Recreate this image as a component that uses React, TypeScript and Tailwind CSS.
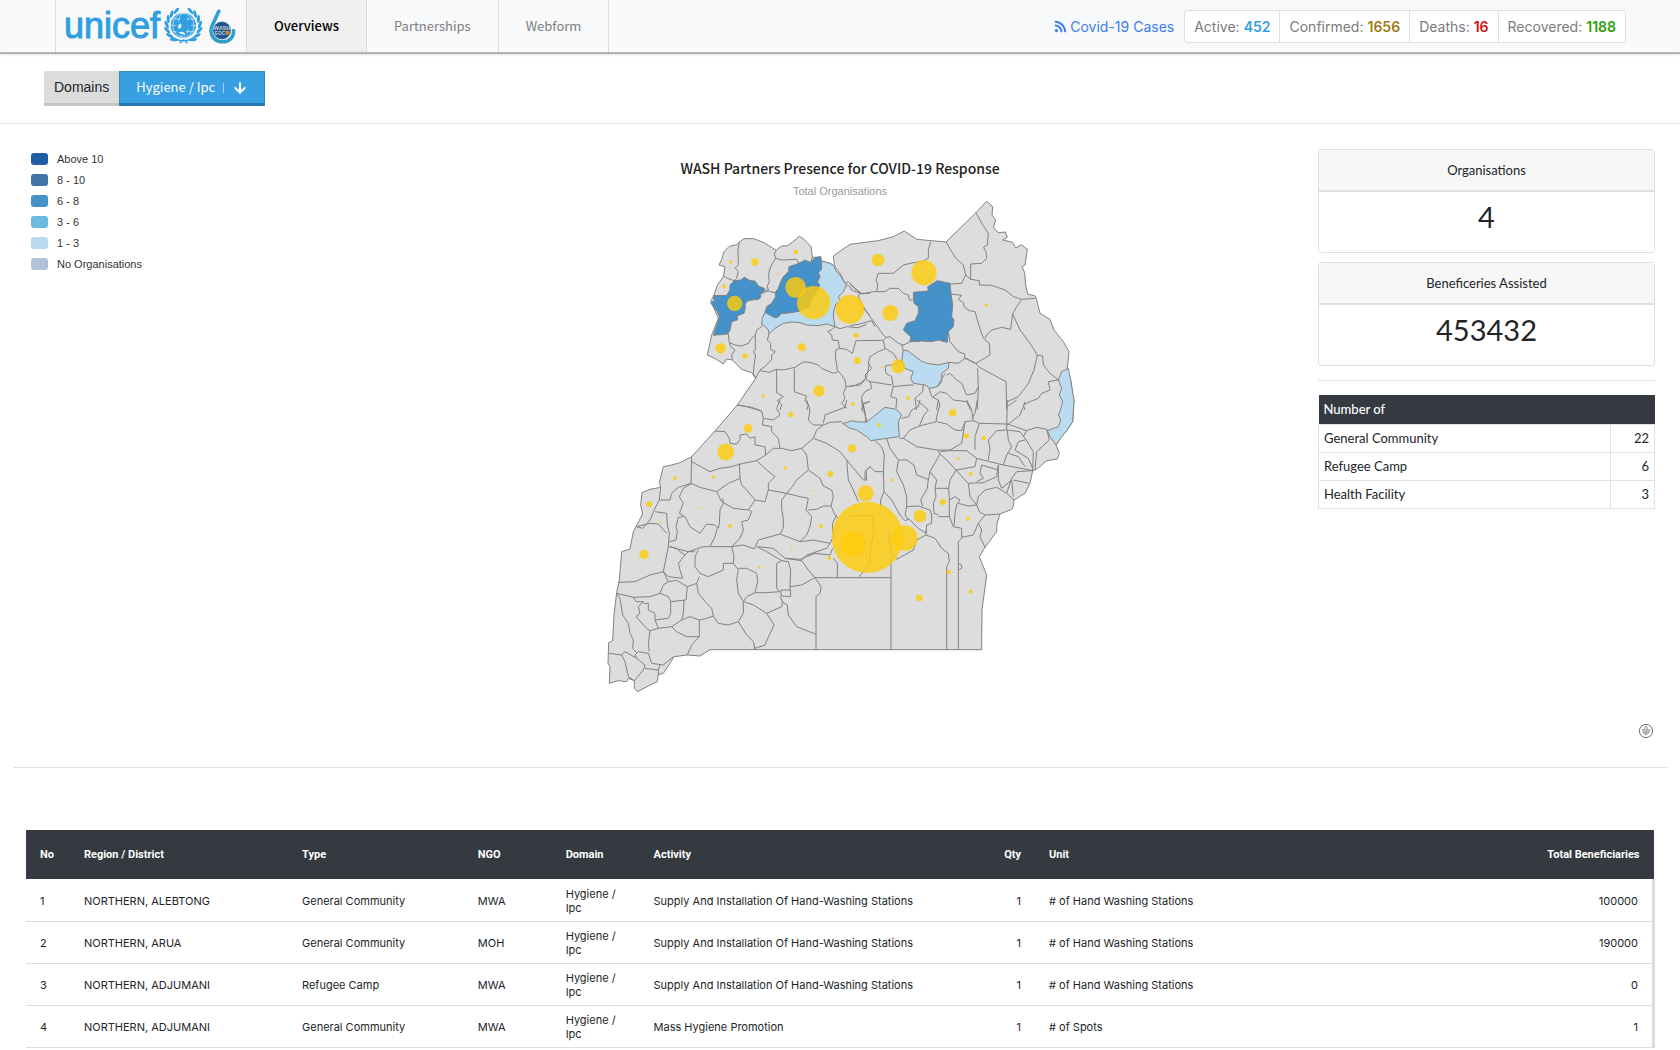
import React from "react";
import { FaRss } from "react-icons/fa";
import { ArrowDown } from "lucide-react";

const SOURCE = "font-['Noto_Sans_CJK_SC',sans-serif]";
const INTER = "font-['Inter',sans-serif]";
const ROBOTO = "font-['Roboto',sans-serif]";
const HELV = "font-['Liberation_Sans',sans-serif]";
const LATO = "font-['Lato',sans-serif]";

const navItems = [
  { label: "Overviews", active: true },
  { label: "Partnerships", active: false },
  { label: "Webform", active: false },
];

const cases = [
  { label: "Active", value: "452", color: "text-[#2f9fe6]" },
  { label: "Confirmed", value: "1656", color: "text-[#a07c12]" },
  { label: "Deaths", value: "16", color: "text-[#d60f0f]" },
  { label: "Recovered", value: "1188", color: "text-[#2f9f10]" },
];

const legend = [
  { label: "Above 10", color: "bg-[#215ca6]" },
  { label: "8 - 10", color: "bg-[#4274aa]" },
  { label: "6 - 8", color: "bg-[#4592ca]" },
  { label: "3 - 6", color: "bg-[#6cb9e2]" },
  { label: "1 - 3", color: "bg-[#b9daec]" },
  { label: "No Organisations", color: "bg-[#b0c1dc]" },
];

const counts = [
  { label: "General Community", value: 22 },
  { label: "Refugee Camp", value: 6 },
  { label: "Health Facility", value: 3 },
];

const rows = [
  ["1", "NORTHERN, ALEBTONG", "General Community", "MWA", "Hygiene / Ipc", "Supply And Installation Of Hand-Washing Stations", "1", "# of Hand Washing Stations", "100000"],
  ["2", "NORTHERN, ARUA", "General Community", "MOH", "Hygiene / Ipc", "Supply And Installation Of Hand-Washing Stations", "1", "# of Hand Washing Stations", "190000"],
  ["3", "NORTHERN, ADJUMANI", "Refugee Camp", "MWA", "Hygiene / Ipc", "Supply And Installation Of Hand-Washing Stations", "1", "# of Hand Washing Stations", "0"],
  ["4", "NORTHERN, ADJUMANI", "General Community", "MWA", "Hygiene / Ipc", "Mass Hygiene Promotion", "1", "# of Spots", "1"],
];

const leaves = [-20, 0, 20, 40, 60, 80, 100];

function Emblem() {
  return (
    <svg viewBox="325 24 120 108" className="h-9 w-10" aria-hidden="true">
      <g fill="#2f9fe0">
        {leaves.map((a) => (
          <ellipse key={"r" + a} cx="383" cy="28" rx="12" ry="4.5" transform={`rotate(${a + 45} 383 78) rotate(28 383 28)`} />
        ))}
        {leaves.map((a) => (
          <ellipse key={"l" + a} cx="383" cy="28" rx="12" ry="4.5" transform={`rotate(${-a - 45} 383 78) rotate(-28 383 28)`} />
        ))}
      </g>
      <path d="M352 112Q372 128 398 120M414 112Q394 128 368 120M372 130L384 119 396 130" fill="none" stroke="#2f9fe0" strokeWidth="4" />
      <circle cx="383" cy="76" r="40" fill="#2f9fe0" stroke="#f9f9fa" strokeWidth="4" />
      <g fill="none" stroke="#e6f2fa" strokeWidth="2">
        <ellipse cx="383" cy="76" rx="32" ry="36" />
        <ellipse cx="383" cy="76" rx="15" ry="36" />
        <path d="M346 76H420M351 57H415M351 95H415" />
      </g>
      <path d="M386 42C374 40 370 54 375 62C362 68 358 84 364 102L392 110C396 100 390 92 384 88C394 92 408 84 408 72C410 60 400 56 394 62C396 52 396 44 386 42Z" fill="#2f9fe0" />
      <path d="M374 70C366 76 364 86 371 86C378 84 380 78 374 70M368 98C376 92 390 96 388 106Z" fill="#eaf5fc" />
    </svg>
  );
}

function SixBadge() {
  return (
    <svg viewBox="460 20 86 112" className="h-9 w-7" aria-hidden="true">
      <defs>
        <linearGradient id="six" x1="0" y1="0" x2="0" y2="1">
          <stop offset="0" stopColor="#2f9fe0" />
          <stop offset="1" stopColor="#2d9fc4" />
        </linearGradient>
      </defs>
      <path d="M493 30L471 78C463 104 480 125 504 125C526 125 540 111 539 90" fill="none" stroke="url(#six)" strokeWidth="11" strokeLinecap="round" />
      <circle cx="503" cy="90" r="28" fill="#1d568c" stroke="#f4f8fa" strokeWidth="1" />
      <text x="503" y="88" textAnchor="middle" fontSize="17" fontWeight="700" fill="#c3d2de" fontFamily="Liberation Sans, sans-serif">WASH</text>
      <text x="497" y="103" textAnchor="middle" fontSize="15" fontWeight="700" fill="#c3d2de" fontFamily="Liberation Sans, sans-serif">EOC</text>
      <rect x="514" y="91" width="12" height="12" fill="#d8843a" />
    </svg>
  );
}

const OUTLINE =
  "M357 345 365 328 372 305 388 289 410 284 418 276 432 266 462 266 492 278 522 297 529 300 545 288 563 287 585 270 598 259 612 268 633 290 637 320 652 325 662 320 664 333 690 340 703 348 700 318 750 283 810 275 835 272 880 260 913 243 950 268 1038 276 1128 188 1160 154 1178 170 1176 195 1187 210 1180 232 1195 248 1216 246 1222 262 1208 270 1238 277 1247 294 1264 284 1282 298 1275 345 1266 350 1274 368 1277 405 1283 432 1306 438 1310 450 1320 490 1350 508 1362 540 1390 575 1407 605 1402 655 1412 690 1420 745 1422 750 1418 815 1400 842 1385 860 1368 885 1378 910 1372 927 1340 932 1325 945 1310 958 1298 962 1290 1000 1275 1030 1242 1050 1240 1068 1235 1078 1200 1092 1191 1120 1190 1145 1155 1192 1138 1220 1160 1275 1146 1380 1145 1499 330 1499 300 1518 262 1515 222 1520 210 1540 190 1570 175 1574 172 1595 145 1608 113 1625 103 1615 103 1592 85 1585 80 1595 55 1592 28 1600 30 1550 24 1540 26 1478 38 1472 42 1395 50 1328 58 1290 65 1205 90 1197 100 1145 128 1092 122 1065 126 1028 150 1018 182 1012 178 998 190 950 215 945 240 938 275 920 345 843 412 765 467 685 455 668 425 658 397 630 380 627 370 642 350 628 322 615 335 555 355 505 340 470 332 455 342 435 352 405 370 380 375 350Z";

const ARUA =
  "M340 437 380 436 390 420 390 405 403 392 422 390 433 382 450 392 465 393 475 408 493 415 491 428 482 430 482 443 475 448 455 450 440 454 435 465 436 475 432 490 412 497 412 510 395 515 390 540 383 552 350 555 340 556 352 520 358 500 352 485 340 470 332 458 343 452Z";
const ADJUMANI =
  "M525 428 535 415 540 400 550 380 565 365 567 350 597 340 615 330 632 338 645 322 662 320 664 358 655 368 660 380 652 395 659 405 640 440 625 470 600 483 570 488 545 490 535 500 525 503 510 495 495 487 500 470 515 460 527 440Z";
const AMURU =
  "M664 333 690 340 703 348 707 362 722 378 735 400 740 404 728 428 715 440 722 455 708 462 702 480 700 500 705 530 680 522 655 527 620 525 600 518 575 516 550 520 525 535 507 552 505 540 497 530 485 525 487 505 495 487 510 495 525 503 535 500 545 490 570 488 600 483 625 470 640 440 659 405 652 395 660 380 655 368 664 358Z";
const AGAGO =
  "M940 427 985 423 983 410 1012 392 1050 400 1053 430 1058 465 1055 500 1062 510 1060 530 1045 545 1042 577 1015 570 995 575 965 573 930 575 932 560 910 540 920 520 945 512 955 490 955 470 942 460Z";
const ALEBTONG =
  "M910 600 922 602 940 615 962 632 980 640 1015 645 1047 637 1045 655 1025 670 1025 695 1012 710 990 715 975 705 940 700 932 685 940 665 915 655 905 635Z";
const AMUDAT =
  "M1405 655 1385 665 1375 690 1385 715 1378 735 1388 755 1380 785 1375 795 1382 810 1375 830 1342 842 1350 860 1368 885 1385 860 1400 842 1418 815 1422 750 1412 690Z";
const AMOLATAR =
  "M727 820 740 818 755 812 775 816 800 816 820 800 855 772 890 778 905 795 895 815 898 860 860 865 812 872 800 860 770 840 750 835Z";

const NORTH_WEST =
  "M418 276 414 300 415 345 405 355 415 365 410 385 403 392M370 378 385 386 403 392M529 300 523 312 527 325 515 345 508 360 506 380 508 395 502 408 505 420 491 420M527 325 545 330 590 328 597 340M637 320 632 338M482 430 505 423 525 428M385 552 388 578 405 585 425 588 445 580 455 565 466 555 470 540 485 530M388 578 392 590 405 600 395 615 397 630M466 555 466 600 460 605 467 615 463 640 460 670 467 685M507 552 502 570 512 580 512 598 526 605 515 615 515 628 497 648 480 660 467 685M480 662 508 667 528 658 550 660 585 652 610 636 630 637 655 645 665 655 700 670 715 665M705 530 697 538 683 545 695 555 697 570 715 572 718 595 708 600 706 620 712 660 725 675 735 690 738 710M718 595 740 598 757 610 768 572 850 571M705 530 720 536 740 530 775 533 800 523M735 400 745 395 765 415 785 430 810 430M740 404 750 410 755 420 780 430 775 438 790 475 810 497M703 348 720 370 735 400M530 658 530 728 550 740 532 752 545 765 540 780M583 655 583 725 620 738 615 752 625 765 620 780M738 710 730 730 735 745 725 760 740 775M738 710 760 708 785 698 800 680 808 640M808 755 790 760 785 780 795 790M412 765 440 770 485 783";
const NORTH_EAST =
  "M0 402 25 425 35 432 70 425 80 425 83 405 78 390 85 370 130 370 160 345 190 338 215 335 235 325 235 300 242 276M80 425 105 425 120 415 145 415 160 430 175 435 178 450 190 450M40 470 60 500 75 520 100 555 108 562M288 276 305 305 318 325 340 345 347 375 335 400 300 402M378 188 395 220 415 250 412 285 400 292 408 305 410 325 395 340 362 342 362 390M347 375 362 388 388 392 388 405 425 406 465 420 490 440 515 448 556 445M303 432 335 436 325 448 340 458 342 470 358 482 375 485 388 530 400 565 418 580 420 615 378 640M295 545 300 575 325 605 345 612 343 622 375 640M515 448 500 470 488 492 482 538 455 532 425 540 410 555 405 565M488 492 510 540 540 580 562 615 552 660 535 700 505 740 472 755M562 615 578 618 580 645 600 670 625 690M625 690 595 695 600 720 575 730 565 745 540 755 520 765 525 780M378 640 385 650 468 695 470 780M378 640 345 625 325 640 297 637M160 600 155 588 180 575 210 573M0 527 30 522 65 512 75 530M100 572 108 562 120 560 145 580 160 585M100 572 105 595 130 610 145 635 155 635M105 597 85 605 60 620 55 640 65 655 45 675 50 690 60 695 125 705M145 640 105 648 108 670 125 680 130 710 122 740 140 745 138 775M0 708 30 705 45 690M60 695 65 715 45 725 35 740 38 780M130 710 180 705 190 705M220 705 218 725 195 745 200 780M237 715 245 740 265 750 260 780M262 710 285 670M250 740 270 725 290 730 310 750 350 755 362 780M290 675 300 670 320 690 335 700 350 735 375 730 385 710 383 655M385 710 382 780";
const SOUTH_WEST =
  "M412 15 455 22 485 33 490 55 520 60 540 45 530 25 540 0M490 55 487 75 515 80 515 95 535 115 540 145M345 93 375 95 388 115 390 130 410 133 420 118 420 105 440 102 450 115 465 110 465 135 495 140 497 165M497 165 520 145 545 145 575 152 605 145 640 115 650 90 670 75 690 67 725 65M620 0 630 30 625 60 640 75 670 75M670 70 675 45 700 35 735 22 740 0M810 5 790 12 795 40 800 65M640 115 680 130 720 155 740 180 765 210 790 240 800 240 798 212 810 200M740 180 745 240 760 270 775 305M605 145 620 165 625 210 660 235 670 258 695 270 700 290 693 318M497 165 470 182 430 190 395 200 360 205 330 215 275 185M275 170 273 250 300 262 350 275 385 250 420 235 418 190M470 182 500 210 525 230 505 250 505 270 495 305 465 300 440 270 425 255 420 235M350 275 365 305 400 325 445 330 465 300M505 270 560 280 600 290 625 295 618 330 635 350 630 380 620 405 600 425M560 280 545 300 545 325 550 360 550 385 540 402 475 420 463 447M560 280 575 262 590 240 625 210M625 330 650 328 670 318 693 318 705 345 715 355M540 402 600 425 640 420 690 430 700 410 697 370 710 345M445 330 455 335 445 360 425 365 430 390 420 415 395 440M463 447 430 435 395 440 310 440 265 455 245 450 208 440M368 295 370 310 360 330 358 370 355 385 345 375 320 372 300 400 270 380 255 350 238 340 250 310 238 290 250 265 275 250M352 385 345 410 330 440M182 262 178 300 210 300 215 280 235 262 273 250M178 300 165 325 150 360 128 385 110 380M165 335 200 340 202 375 208 400 205 440 190 515M110 380 150 370 175 372 200 400M250 350 235 352 228 380 232 395 228 420 208 425M55 547 105 545 150 525 190 515M208 440 230 445 240 455 255 465 235 490 240 510 248 535 205 530 190 515M395 440 402 470 400 490 370 490 370 510 325 530 300 520 285 500 285 470 295 450M255 465 265 455 285 455M190 515 205 545 230 541 262 560 290 550 298 530M205 545 190 555 180 580 205 590 212 605 258 600 262 560M50 580 100 592 150 590 180 580M50 580 60 595 68 645 85 670 90 700 100 720 98 745 110 758M100 592 108 605 130 605 115 620 120 640 108 650 140 685 150 692M130 610 145 610 145 630 165 640 165 660 205 655 212 640 212 605M165 660 175 685 150 692 145 730 148 755M175 685 215 680 245 660 250 640 252 602M215 680 230 695 260 710 298 710 298 660 270 650 245 660M290 550 295 580 320 610 335 625 340 648 320 655 298 660M340 648 355 670 385 675 415 665 430 640 430 605 415 580 410 540 415 510 400 490M415 505 440 505 470 520 473 545 465 578 440 590 430 605M470 440 500 455 545 482 530 490 530 565 540 575 500 578 465 578M475 440 520 445 555 475 600 478 645 460 690 465 698 445M690 430 680 445 620 465 605 480M545 482 565 485 572 510 570 560 572 590 543 588 543 570 572 570M570 560 605 555 645 533 625 510 605 482 555 475M645 533 875 533M712 533 712 490 700 475M645 533 663 560 660 580 648 590 648 748M432 605 460 615 500 640 545 620 548 605 540 590M500 640 522 675 510 700 495 735 465 745 460 725 440 705 415 665M463 735 463 748M545 605 562 615 565 645 590 680 648 703M298 710 275 735 262 765M26 760 65 765 75 755 110 775 105 765 115 755 145 760 155 790 190 795 220 770M65 765 75 785 85 830 103 842M110 775 135 795 130 810 103 842M135 805 175 810 180 795M175 810 175 824";
const SOUTH_EAST =
  "M35 0 45 40 48 68M155 55 175 50 185 30 205 20 210 0M200 0 235 30 222 45 208 78 180 90 160 115M208 78 260 65 290 72 315 90 335 92 345 65 370 62 388 70 472 72M265 0 270 15 262 40 258 65M350 0 365 30 370 60M382 0 375 40 365 55M388 70 375 110 375 150M345 65 335 130 300 150 262 150 230 145 200 140 160 115 148 115M110 115 120 145 145 180 140 215 160 255 170 290 170 320 165 345 175 358 165 362 150 345 125 300 102 275 100 215 103 165 95 140 75 122M100 215 75 215 60 200 45 215 45 240M102 275 92 300 92 320M145 180 170 180 192 195 200 225 235 238 232 265 212 300 218 318M262 150 270 162 240 215 260 240 255 265 258 290 250 310 252 340 265 345M240 215 235 240M270 162 290 180 318 210 300 240 296 265 255 265M296 265 298 300 298 350 265 350M170 320 205 318 240 330 245 345 245 370 230 375 228 400 205 385 175 355M228 390 228 405 255 415 275 445 295 460 298 485 290 500 290 748M228 405 200 420 190 450 140 478M298 350 310 380 335 385 335 415 325 425 325 748M325 490 335 495 335 505 325 510M298 300 315 290 330 300 320 315 315 340 312 380M325 310 355 318 380 315 388 335 405 345 450 342M318 210 345 240 355 250 360 290 380 315M405 345 385 370 370 405 335 412M385 370 395 390 390 410 405 442M380 315 385 290 405 270 440 262 470 280 492 300M355 250 400 248 440 230 445 195M318 210 375 200 380 175 350 152 300 152 270 155M380 175 460 195 550 212M395 195 390 220 400 235 380 245M395 195 445 210M445 195 445 240 455 265M455 265 485 240 490 290M490 240 537 250M550 212 500 215 485 235 470 280M415 180 420 145 415 120 440 92 470 90 472 0M472 90 475 120 485 140 470 165 460 195M472 90 510 95 525 115 550 155 548 210M525 120 505 125 495 150 535 175 548 205M475 160 505 170 525 200M520 110 530 92 560 82 590 88 598 120 560 155 555 210M472 72 510 85 530 92M472 20 500 0M472 75 510 45 520 20 525 5M123 478 123 748M0 347 68 347 72 395 62 440 60 490 28 530M115 400 125 460 140 478";

const BUBBLES: [number, number, number][] = [
  [392, 335, 5], [465, 336, 11], [587, 306, 7], [371, 409, 6], [404, 460, 23], [587, 412, 31], [641, 458, 50],
  [750, 478, 43], [362, 595, 16], [435, 618, 8], [605, 592, 12], [768, 556, 8], [772, 632, 10], [657, 723, 17],
  [490, 738, 5], [758, 762, 6], [532, 372, 3], [834, 330, 19], [972, 368, 38], [871, 489, 24], [895, 649, 21],
  [1159, 466, 5], [925, 744, 6], [845, 652, 3], [1100, 546, 2], [573, 794, 8], [444, 835, 13], [377, 906, 25],
  [225, 984, 6], [341, 981, 5], [147, 1063, 9], [557, 954, 5], [756, 895, 12], [691, 972, 9], [132, 1213, 14],
  [390, 1127, 6], [304, 1073, 3], [180, 1117, 3], [403, 1031, 2], [470, 990, 2], [640, 1022, 3], [662, 1129, 6],
  [688, 1224, 6], [575, 1190, 3], [477, 1252, 4], [837, 825, 6], [1058, 788, 11], [1099, 858, 8], [1152, 864, 7],
  [1075, 926, 4], [1112, 972, 6], [877, 990, 5], [797, 1030, 24], [802, 1162, 107], [758, 1182, 38], [915, 1164, 38],
  [960, 1098, 19], [1029, 1056, 9], [1104, 1106, 6], [1046, 1266, 7], [958, 1344, 10], [1112, 1325, 6],
];

function UgandaMap() {
  return (
    <svg viewBox="0 150 1440 1500" className="h-[500px] w-[480px]" role="img" aria-label="Map of partner presence by district">
      <g stroke="#828282" strokeWidth="3" strokeLinejoin="round">
        <path d={OUTLINE} fill="#dddddd" />
        <path d={AMURU} fill="#bbdcf0" />
        <path d={ALEBTONG} fill="#bbdcf0" />
        <path d={AMUDAT} fill="#bbdcf0" />
        <path d={AMOLATAR} fill="#bbdcf0" />
        <path d={ARUA} fill="#4592ca" />
        <path d={ADJUMANI} fill="#4592ca" />
        <path d={AGAGO} fill="#4592ca" />
        <g fill="none">
          <path d={NORTH_WEST} />
          <path d={NORTH_EAST} transform="translate(750 0)" />
          <path d={SOUTH_WEST} transform="translate(0 750)" />
          <path d={SOUTH_EAST} transform="translate(750 750)" />
        </g>
      </g>
      <g fill="#fccc0a" fillOpacity="0.82">
        {BUBBLES.map(([x, y, r]) => (
          <circle key={`${x}-${y}`} cx={x} cy={y} r={r} />
        ))}
      </g>
    </svg>
  );
}

function StatCard({ title, value }: { title: string; value: string }) {
  return (
    <section className="rounded-[3px] border border-[#dfdfdf] text-center text-[#212529]">
      <h2 className="border-b-2 border-[#dfdfdf] bg-[#f7f7f7] py-[10px] text-[13px] leading-5">{title}</h2>
      <p className="pt-[7px] pb-[17px] text-[29px] leading-9">{value}</p>
    </section>
  );
}

export default function App() {
  return (
    <div className={`min-h-screen bg-white text-[#212529] ${INTER}`}>
      <header className="flex h-[54px] items-stretch justify-between border-b-2 border-[#b4b4b4] bg-[#f8f9fb] pr-[54px] pl-[55px] shadow-sm">
        <nav className="flex items-stretch">
          <a href="#home" className="flex w-[192px] items-center border-x border-[#dcdcdc] bg-[#f9f9fa] pl-2">
            <span className={`text-[36px] leading-[50px] text-[#2f9fe0] [-webkit-text-stroke:1px_#2f9fe0] ${HELV}`}>unicef</span>
            <span className="ml-1"><Emblem /></span>
            <span className="ml-1"><SixBadge /></span>
          </a>
          {navItems.map((item) => (
            <a
              key={item.label}
              href={`#${item.label.toLowerCase()}`}
              className={`flex items-center border-r border-[#dcdcdc] px-[27px] text-[13px] ${SOURCE} ${item.active ? "bg-[#f0f0f0] font-medium text-black" : "text-[#7d7d7d]"}`}
            >
              {item.label}
            </a>
          ))}
        </nav>
        <div className="flex items-center gap-[10px] text-[14px] text-[#7b7b7b]">
          <a href="#cases" className="flex items-center gap-[3px] text-[#3d7df0]">
            <FaRss className="size-[13px]" />
            Covid-19 Cases
          </a>
          <ul className="flex h-[33px] items-stretch divide-x divide-[#dcdfe4] rounded-[3px] border border-[#dcdfe4] bg-white">
            {cases.map((c) => (
              <li key={c.label} className="flex items-center gap-1 px-[9px]">
                {c.label}: <b className={`font-semibold ${c.color}`}>{c.value}</b>
              </li>
            ))}
          </ul>
        </div>
      </header>

      <div className="flex border-b border-[#e2e2e2] px-11 py-[17px]">
        <span className={`flex h-[35px] items-center border-b-[3px] border-[#c6c6c6] bg-[#dcdcdc] px-[10px] text-[14px] ${HELV}`}>Domains</span>
        <button type="button" className={`flex h-[35px] items-center border border-b-[3px] border-[#2a93b0] border-b-[#2a78b0] bg-[#389fe2] px-4 text-[13px] text-white ${SOURCE}`}>
          <span className="pb-[3px] leading-none">Hygiene / Ipc</span>
          <span className="mx-2 h-[10px] w-px bg-[#a8d4f2]" />
          <ArrowDown className="size-4" strokeWidth={3} />
        </button>
      </div>

      <main>
        <div className="grid grid-cols-[336px_1fr_337px] pt-[25px] pr-[25px] pl-[26px]">
          <ul className={`space-y-[9px] pt-1 pl-[5px] text-[11px] leading-3 text-[#333] ${HELV}`}>
            {legend.map((l) => (
              <li key={l.label} className="flex items-center gap-[9px]">
                <span className={`h-3 w-[17px] rounded-[3px] ${l.color}`} />
                {l.label}
              </li>
            ))}
          </ul>

          <section className="flex flex-col items-center">
            <h1 className={`pt-2 text-[14px] leading-[22px] font-medium text-[#222] ${SOURCE}`}>
              WASH Partners Presence for COVID-19 Response
            </h1>
            <p className={`pt-1 pb-px text-[11px] leading-4 text-[#999] ${HELV}`}>Total Organisations</p>
            <UgandaMap />
          </section>

          <aside className={`flex flex-col ${LATO}`}>
            <div className="space-y-[9px]">
              <StatCard title="Organisations" value="4" />
              <StatCard title="Beneficeries Assisted" value="453432" />
            </div>
            <hr className="my-[14px] border-[#e2e2e2]" />
            <table className="w-full border-collapse text-[13px] leading-[27px]">
              <thead>
                <tr className="bg-[#343a40] text-left text-white">
                  <th colSpan={2} scope="colgroup" className="px-[5px] py-px font-medium">Number of</th>
                </tr>
              </thead>
              <tbody>
                {counts.map((c) => (
                  <tr key={c.label} className="border border-[#e2e2e2]">
                    <td className="px-[5px]">{c.label}</td>
                    <td className="w-11 border-l border-[#e2e2e2] px-[5px] text-right">{c.value}</td>
                  </tr>
                ))}
              </tbody>
            </table>
          </aside>
        </div>

        <div className="flex justify-end pt-[23px] pr-[25px] pb-7">
          <button type="button" aria-label="Download" className="mr-px">
            <svg viewBox="0 0 16 16" className="size-4" fill="none" stroke="#6f6f6f">
              <circle cx="8" cy="8" r="6.6" />
              <path d="M8 3.5C6.8 3.5 6.8 5 6.8 7.3L4.6 6.7Q4 9.8 8 12Q12 9.8 11.4 6.7L9.2 7.3C9.2 5 9.2 3.5 8 3.5ZM5.2 9.2H10.8M8 6V11" strokeWidth="0.8" />
            </svg>
          </button>
        </div>
        <hr className="mr-3 ml-[14px] border-[#e2e2e2]" />

        <div className="pt-[62px] pr-[25px] pl-[26px]">
          <table className="w-full table-fixed border-collapse text-[11px] leading-[14px]">
            <colgroup>
              <col className="w-[2.7%]" />
              <col className="w-[13.4%]" />
              <col className="w-[10.8%]" />
              <col className="w-[5.4%]" />
              <col className="w-[5.4%]" />
              <col className="w-[20.3%]" />
              <col className="w-[4%]" />
              <col className="w-[25%]" />
              <col className="w-[13%]" />
            </colgroup>
            <thead>
              <tr className={`h-[49px] bg-[#343a40] text-left text-[11px] text-white ${ROBOTO}`}>
                {["No", "Region / District", "Type", "NGO", "Domain", "Activity", "Qty", "Unit", "Total Beneficiaries"].map((h, i) => (
                  <th key={h} scope="col" className={`px-[14px] font-bold whitespace-nowrap ${i === 6 || i === 8 ? "text-right" : ""}`}>{h}</th>
                ))}
              </tr>
            </thead>
            <tbody>
              {rows.map((r) => (
                <tr key={r[0]} className="h-[42px] border-b border-[#dedede]">
                  {r.map((v, i) => (
                    <td
                      key={i}
                      className={`px-[14px] pt-0.5 ${i === 6 || i === 8 ? "text-right" : ""} ${i === 8 ? "border-r-[3px] border-[#dedede]" : ""} ${i === 4 ? "" : "whitespace-nowrap"}`}
                    >
                      {v}
                    </td>
                  ))}
                </tr>
              ))}
            </tbody>
          </table>
        </div>
      </main>
    </div>
  );
}
